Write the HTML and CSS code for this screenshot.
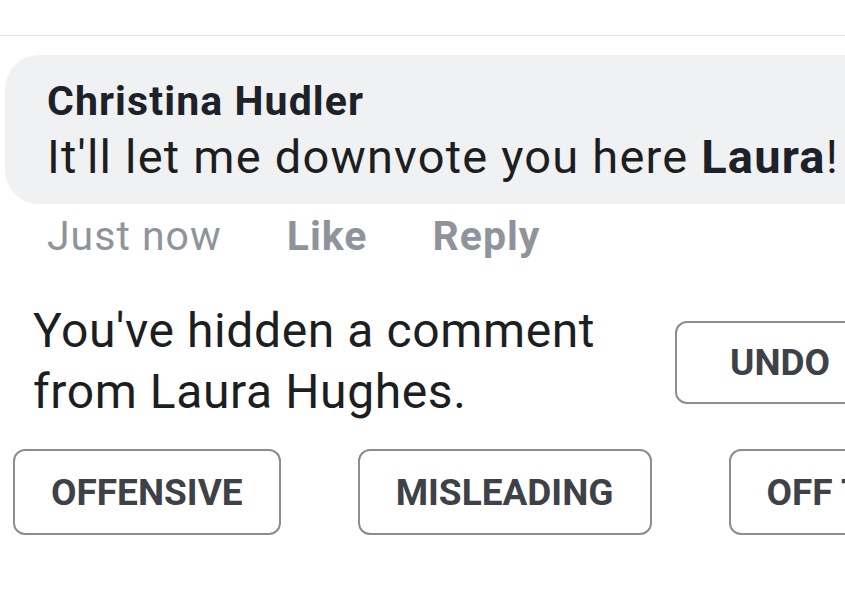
FILE: index.html
```html
<!DOCTYPE html>
<html lang="en">
<head>
  <meta charset="UTF-8">
  <meta name="viewport" content="width=device-width, initial-scale=1.0">
  <title>Hidden comment</title>
  <link rel="stylesheet" href="styles.css">
</head>
<body>
  <div class="page">
    <div class="topbar"></div>
    <div class="comment">
      <div class="bubble">
        <div class="author">Christina Hudler</div>
        <div class="text">It'll let me downvote you here <b>Laura</b>!</div>
      </div>
      <div class="meta">
        <span class="time">Just now</span>
        <span class="action">Like</span>
        <span class="action">Reply</span>
      </div>
    </div>
    <div class="hidden">
      <p class="notice">You've hidden a comment<br>from Laura Hughes.</p>
      <button class="btn undo">UNDO</button>
    </div>
    <div class="reasons">
      <button class="btn">OFFENSIVE</button>
      <button class="btn">MISLEADING</button>
      <button class="btn">OFF TOPIC</button>
    </div>
  </div>
</body>
</html>
```

FILE: styles.css
```css
body {
  margin: 0;
  background: #fff;
  font-family: Roboto, "Liberation Sans", sans-serif;
  color: #1c1e21;
}
.page {
  width: 845px;
  height: 600px;
  overflow: hidden;
}
.topbar {
  height: 35px;
  border-bottom: 1px solid #e3e5e8;
}
.comment {
  padding-top: 19px;
}
.bubble {
  margin-left: 5px;
  margin-right: -60px;
  height: 149px;
  box-sizing: border-box;
  padding: 22px 0 0 42px;
  background: #f0f1f3;
  border-radius: 34px;
}
.author {
  font-size: 41px;
  font-weight: 700;
  line-height: 48px;
  letter-spacing: 1.1px;
  color: #1d2129;
  white-space: nowrap;
}
.text {
  margin-top: 4px;
  font-size: 47px;
  line-height: 56px;
  letter-spacing: 1.2px;
  color: #1c1e21;
  white-space: nowrap;
}
.text b {
  color: #1d2129;
}
.meta {
  display: flex;
  gap: 65px;
  padding: 8px 0 0 47px;
  font-size: 41px;
  line-height: 48px;
  letter-spacing: 1px;
  color: #8f949c;
}
.meta .action {
  font-weight: 700;
}
.hidden {
  display: flex;
  justify-content: space-between;
  align-items: flex-start;
  padding: 40px 0 0 33px;
  margin-right: -60px;
}
.notice {
  margin: 0;
  font-size: 48px;
  line-height: 61px;
  letter-spacing: 0.6px;
  color: #1c1e21;
}
.btn {
  font-family: Roboto, "Liberation Sans", sans-serif;
  font-size: 37px;
  font-weight: 700;
  color: #3e4248;
  background: #fff;
  border: 2px solid #8a8d91;
  border-radius: 12px;
  height: 86px;
  padding: 0 36px;
  white-space: nowrap;
  flex-shrink: 0;
}
.undo {
  margin-top: 21px;
  width: 230px;
  height: 83px;
  padding: 0 0 0 53px;
  text-align: left;
}
.reasons {
  display: flex;
  gap: 77px;
  padding: 27px 0 0 13px;
}
```
